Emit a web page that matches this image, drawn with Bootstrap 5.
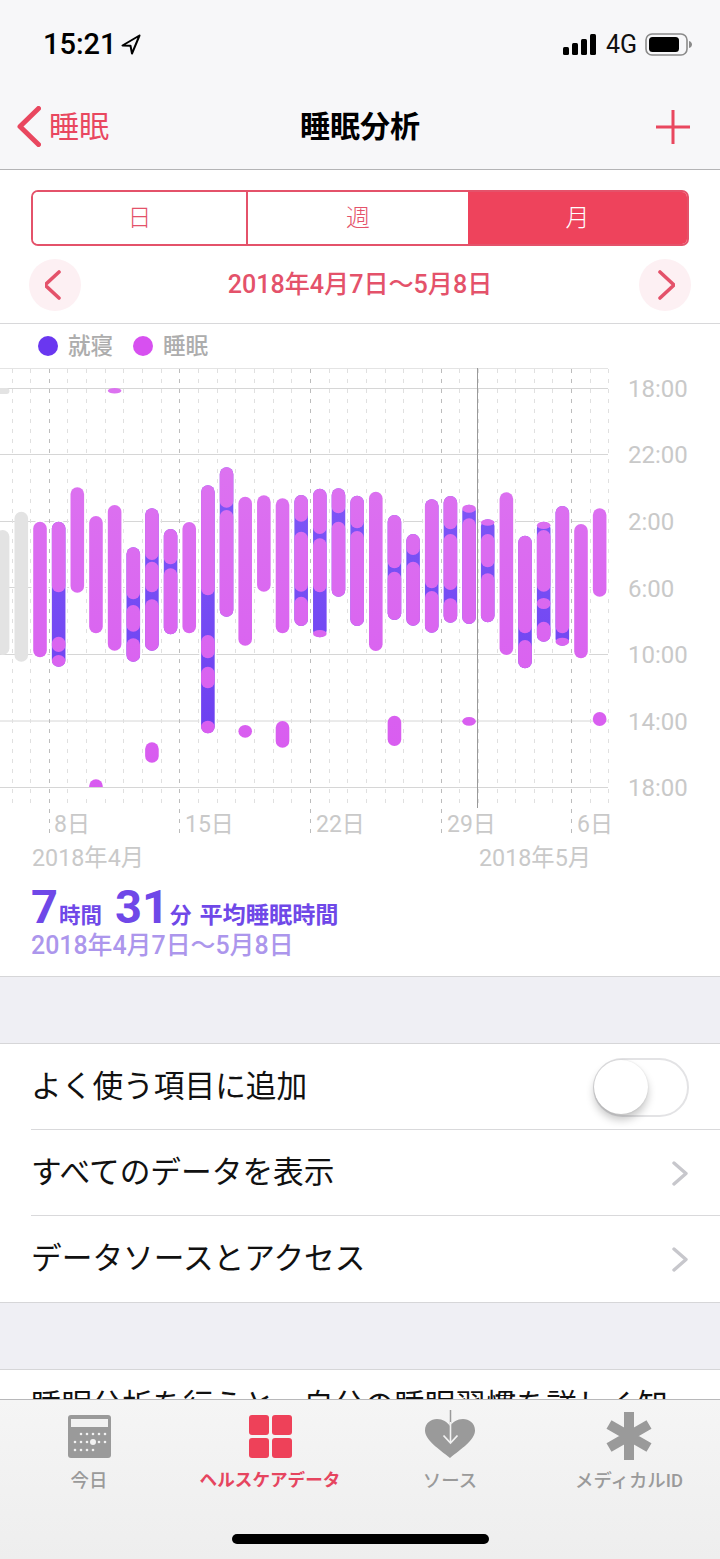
<!DOCTYPE html>
<html lang="ja">
<head>
  <meta charset="UTF-8" />
  <meta name="viewport" content="width=device-width, initial-scale=1.0"/>
  <title>睡眠分析</title>
  <link href="https://cdn.jsdelivr.net/npm/bootstrap@5.3.0/dist/css/bootstrap.min.css" rel="stylesheet"/>
  <style>
    body {
      width: 720px;
      height: 1559px;
      overflow: hidden;
      background: #efeff4;
      font-family: Roboto, "Noto Sans CJK JP", sans-serif;
      position: relative;
    }
    .top-bar {
      height: 170px;
      background: #f7f7f9;
      border-bottom: 1px solid #b4b4b6;
    }
    .status-row {
      height: 88px;
      padding: 0 28px 0 43px;
    }
    .clock {
      font-size: 29px;
      font-weight: 500;
      color: #000;
      line-height: 1;
    }
    .net-label {
      font-size: 25px;
      color: #111;
      line-height: 1;
    }
    .nav-row {
      height: 81px;
      padding: 0 30px 4px 17px;
      position: relative;
    }
    .nav-back {
      font-size: 30px;
      color: #e9475f;
      line-height: 1;
    }
    .nav-title {
      position: absolute;
      left: 0;
      right: 0;
      text-align: center;
      font-size: 30px;
      font-weight: 700;
      color: #000;
      line-height: 1;
    }
    .chart-sheet {
      background: #fff;
      border-bottom: 1px solid #d6d6d8;
      height: 807px;
      padding-top: 20px;
    }
    .seg-group {
      margin: 0 31px;
      width: 658px;
      height: 56px;
      border: 2px solid #e4526a;
      border-radius: 7px;
      overflow: hidden;
    }
    .seg-btn {
      flex: 0 0 auto;
      padding: 0;
      border: 0;
      border-radius: 0;
      background: #fff;
      color: #e4526a;
      font-size: 24px;
      font-weight: 300;
      line-height: 1;
    }
    .seg-first {
      width: 215px;
      border-right: 2px solid #e4526a;
    }
    .seg-mid {
      width: 220px;
    }
    .seg-on {
      width: 219px;
      background: #ee435c;
      color: #fff;
    }
    .date-row {
      height: 78px;
      padding: 13px 29px 13px 29px;
      border-bottom: 1px solid #d8d8da;
    }
    .round-btn {
      width: 52px;
      height: 52px;
      border-radius: 50%;
      background: #fdf0f3;
    }
    .range-title {
      font-size: 25.1px;
      font-weight: 500;
      color: #e4526a;
      line-height: 1;
    }
    .legend-row {
      height: 44px;
      padding-left: 38px;
    }
    .legend-dot {
      width: 20px;
      height: 20px;
      border-radius: 50%;
    }
    .legend-name {
      font-size: 22.5px;
      font-weight: 500;
      color: #adadad;
      line-height: 1;
      margin: 0 20px 0 10px;
    }
    .chart-svg {
      display: block;
      width: 720px;
      height: 510px;
    }
    .chart-svg text {
      font-family: Roboto, "Noto Sans CJK JP", sans-serif;
      fill: #c9c9c9;
    }
    .avg-box {
      padding: 5px 0 0 31px;
      color: #6f48e8;
      line-height: 1;
    }
    .avg-main {
      font-weight: 700;
      height: 51px;
    }
    .avg-num {
      font-size: 47px;
      font-weight: 700;
      margin-right: 1px;
    }
    .avg-unit {
      font-size: 21.5px;
      margin-right: 13px;
    }
    .avg-label {
      font-size: 23.2px;
      margin-left: -5px;
    }
    .avg-range {
      font-size: 24.9px;
      font-weight: 500;
      color: #ac96ec;
    }
    .gray-gap {
      height: 66px;
    }
    .menu-list {
      background: #fff;
      border-top: 1px solid #d6d6d8;
      border-bottom: 1px solid #d6d6d8;
      border-radius: 0;
    }
    .menu-item {
      height: 86px;
      padding: 0 32px 0 31px;
      border: 0;
      font-size: 30.7px;
      color: #111;
      line-height: 1;
      position: relative;
    }
    .menu-item + .menu-item::before {
      content: "";
      position: absolute;
      left: 31px;
      right: 0;
      top: -1px;
      border-top: 1px solid #d9d9db;
    }
    .toggle-track {
      width: 96px;
      height: 59px;
      margin-right: -1px;
      border: 2px solid #e3e3e5;
      border-radius: 30px;
      background: #fff;
    }
    .toggle-knob {
      width: 54px;
      height: 54px;
      margin-left: -1px;
      border-radius: 50%;
      background: #fff;
      box-shadow: 0 6px 9px rgba(0,0,0,.22), 0 0 2px rgba(0,0,0,.12);
    }
    .note-block {
      background: #fff;
      border-top: 1px solid #d6d6d8;
      height: 200px;
      padding: 18px 0 0 31px;
      font-size: 30.4px;
      color: #111;
      line-height: 1.2;
      white-space: nowrap;
    }
    .tab-strip {
      position: absolute;
      left: 0;
      right: 0;
      bottom: 0;
      height: 160px;
      background: linear-gradient(#f5f5f5, #eeeeee);
      border-top: 1px solid #b8b8ba;
    }
    .tab-slot {
      position: absolute;
      top: 0;
      text-align: center;
      color: #9a9a9a;
      font-size: 18.4px;
      font-weight: 500;
      line-height: 1;
      white-space: nowrap;
    }
    .tab-slot svg {
      display: block;
      margin: 0 auto;
    }
    .tab-text {
      position: absolute;
      left: 0;
      right: 0;
      top: 72px;
    }
    .tab-active {
      color: #e6455f;
      font-weight: 700;
      font-size: 17.6px;
    }
    .home-bar {
      position: absolute;
      left: 232px;
      top: 134px;
      width: 257px;
      height: 10px;
      border-radius: 5px;
      background: #000;
    }
  </style>
</head>
<body>

<div class="top-bar">
  <div class="status-row d-flex align-items-center justify-content-between">
    <div class="d-flex align-items-center gap-1">
      <span class="clock">15:21</span>
      <svg width="20" height="21" viewBox="0 0 20 21"><path d="M18.5 1.5 1.5 11.5 9.5 11.8 11 19.5Z" fill="none" stroke="#000" stroke-width="2" stroke-linejoin="round"/></svg>
    </div>
    <div class="d-flex align-items-center">
      <svg width="34" height="21" viewBox="0 0 34 21" style="margin-right:9px"><rect x="0" y="13" width="6" height="8" rx="1.5"/><rect x="9" y="9" width="6" height="12" rx="1.5"/><rect x="18" y="5" width="6" height="16" rx="1.5"/><rect x="27" y="0" width="6" height="21" rx="1.5"/></svg>
      <span class="net-label me-2">4G</span>
      <svg width="47" height="23" viewBox="0 0 47 23"><rect x="1" y="1" width="41" height="21" rx="6" fill="none" stroke="#8a8a8a" stroke-width="1.6"/><rect x="4" y="4" width="30" height="15" rx="3.5"/><path d="M44 8c2 .5 3 2 3 3.500s-1 3-3 3.500Z" fill="#8a8a8a"/></svg>
    </div>
  </div>
  <div class="nav-row d-flex align-items-center justify-content-between">
    <div class="d-flex align-items-center nav-back">
      <svg width="24" height="41" viewBox="0 0 24 41" class="me-2"><path d="M21.500 2.500 3 20.500l18.500 18" fill="none" stroke="#e9475f" stroke-width="5" stroke-linecap="round" stroke-linejoin="round"/></svg>
      <span>睡眠</span>
    </div>
    <div class="nav-title">睡眠分析</div>
    <svg width="34" height="34" viewBox="0 0 34 34"><path d="M17 0v34M0 17h34" stroke="#e9475f" stroke-width="3"/></svg>
  </div>
</div>

<div class="chart-sheet">
  <div class="seg-group d-flex" role="group">
    <button type="button" class="btn seg-btn seg-first">日</button>
    <button type="button" class="btn seg-btn seg-mid">週</button>
    <button type="button" class="btn seg-btn seg-on">月</button>
  </div>
  <div class="date-row d-flex align-items-center justify-content-between">
    <div class="round-btn d-flex align-items-center justify-content-center">
      <svg width="20" height="30" viewBox="3 0 20 30"><path d="M17 2 3 15l14 13" fill="none" stroke="#e4526a" stroke-width="3.600" stroke-linecap="round" stroke-linejoin="round"/></svg>
    </div>
    <div class="range-title">2018年4月7日〜5月8日</div>
    <div class="round-btn d-flex align-items-center justify-content-center">
      <svg width="20" height="30" viewBox="-2 0 20 30"><path d="M3 2l14 13L3 28" fill="none" stroke="#e4526a" stroke-width="3.600" stroke-linecap="round" stroke-linejoin="round"/></svg>
    </div>
  </div>
  <div class="legend-row d-flex align-items-center">
    <span class="legend-dot" style="background:#6a37f0"></span><span class="legend-name">就寝</span>
    <span class="legend-dot" style="background:#d750f0"></span><span class="legend-name">睡眠</span>
  </div>
  <svg class="chart-svg" id="sleepChart" viewBox="0 368 720 510" xmlns="http://www.w3.org/2000/svg">
    <defs>
      <linearGradient id="pinkFill" gradientUnits="userSpaceOnUse" x1="0" y1="470" x2="0" y2="790">
        <stop offset="0" stop-color="#dc72f0"/><stop offset="1" stop-color="#d85af0"/>
      </linearGradient>
      <linearGradient id="purpleFill" gradientUnits="userSpaceOnUse" x1="0" y1="470" x2="0" y2="740">
        <stop offset="0" stop-color="#7f58f7"/><stop offset="1" stop-color="#6c3ff0"/>
      </linearGradient>
    </defs>
  </svg>
  <div class="avg-box">
    <div class="avg-main d-flex align-items-baseline">
      <span class="avg-num">7</span><span class="avg-unit">時間</span>
      <span class="avg-num">31</span><span class="avg-unit">分</span>
      <span class="avg-label">平均睡眠時間</span>
    </div>
    <div class="avg-range">2018年4月7日〜5月8日</div>
  </div>
</div>

<div class="gray-gap"></div>

<div class="list-group list-group-flush menu-list">
  <div class="list-group-item menu-item d-flex align-items-center justify-content-between">
    <span>よく使う項目に追加</span>
    <div class="toggle-track d-flex align-items-center"><div class="toggle-knob"></div></div>
  </div>
  <div class="list-group-item menu-item d-flex align-items-center justify-content-between">
    <span>すべてのデータを表示</span>
    <svg width="16" height="25" viewBox="0 0 16 25"><path d="M2 2l12 10.500L2 23" fill="none" stroke="#c7c7cc" stroke-width="3.400" stroke-linecap="round" stroke-linejoin="round"/></svg>
  </div>
  <div class="list-group-item menu-item d-flex align-items-center justify-content-between">
    <span>データソースとアクセス</span>
    <svg width="16" height="25" viewBox="0 0 16 25"><path d="M2 2l12 10.500L2 23" fill="none" stroke="#c7c7cc" stroke-width="3.400" stroke-linecap="round" stroke-linejoin="round"/></svg>
  </div>
</div>

<div class="gray-gap"></div>

<div class="note-block">睡眠分析を行うと、自分の睡眠習慣を詳しく知</div>

<div class="tab-strip">
  <div class="tab-slot" style="left:29px;width:120px">
    <svg width="43" height="43" viewBox="0 0 43 43" style="margin-top:15px">
      <rect width="43" height="43" rx="3" fill="#9a9a9a"/>
      <rect x="3" y="4" width="37" height="8" fill="#f2f2f2"/>
      <g fill="#f2f2f2">
        <circle cx="13" cy="19" r="1.300"/><circle cx="19" cy="19" r="1.300"/><circle cx="25" cy="19" r="1.300"/><circle cx="31" cy="19" r="1.300"/><circle cx="37" cy="19" r="1.300"/>
        <circle cx="7" cy="27" r="1.300"/><circle cx="13" cy="27" r="1.300"/><circle cx="19" cy="27" r="1.300"/><circle cx="25" cy="27" r="3"/><circle cx="31" cy="27" r="1.300"/><circle cx="37" cy="27" r="1.300"/>
        <circle cx="7" cy="35" r="1.300"/><circle cx="13" cy="35" r="1.300"/><circle cx="19" cy="35" r="1.300"/><circle cx="25" cy="35" r="1.300"/>
      </g>
    </svg>
    <div class="tab-text">今日</div>
  </div>
  <div class="tab-slot tab-active" style="left:190px;width:160px">
    <svg width="43" height="43" viewBox="0 0 43 43" style="margin-top:15px" fill="#ee4159">
      <rect width="20" height="20" rx="3"/><rect x="23" width="20" height="20" rx="3"/><rect y="23" width="20" height="20" rx="3"/><rect x="23" y="23" width="20" height="20" rx="3"/>
    </svg>
    <div class="tab-text">ヘルスケアデータ</div>
  </div>
  <div class="tab-slot" style="left:390px;width:120px">
    <svg width="50" height="49" viewBox="0 0 50 49" style="margin-top:10px">
      <path d="M25 48C14 39 0 30 0 20.500 0 13 6 9 12 9c6 0 10 3 13 7 3-4 7-7 13-7 6 0 12 4 12 11.500C50 30 36 39 25 48Z" fill="#9a9a9a"/>
      <path d="M25.500 0v32" stroke="#9a9a9a" stroke-width="1.500"/>
      <path d="M25.500 12v20" stroke="#f2f2f2" stroke-width="1.600"/>
      <path d="M18.500 25.500l7 7.500 7-7.500" fill="none" stroke="#f2f2f2" stroke-width="1.800"/>
    </svg>
    <div class="tab-text">ソース</div>
  </div>
  <div class="tab-slot" style="left:569px;width:120px">
    <svg width="46" height="48" viewBox="0 0 46 48" style="margin-top:12px">
      <path d="M23 0v48M3 12.500l40 23M43 12.500l-40 23" stroke="#9a9a9a" stroke-width="10"/>
    </svg>
    <div class="tab-text">メディカルID</div>
  </div>
  <div class="home-bar"></div>
</div>

<script>
  // one entry per day: list of pink [top, bottom] runs, y in page pixels
  const dayBars = [
    [[521.7,657.3]],
    [[521.7,592.3],[636.7,652],[655,666.7]],
    [[487.3,592.7]],
    [[516,633.3]],
    [[505,650.7]],
    [[547.3,599.3],[605,631.7],[638.3,661.7]],
    [[508.3,560],[561.7,592.3],[599.3,650.7]],
    [[529,564.3],[568.3,634.3]],
    [[522,633.3]],
    [[485.3,595.3],[635,658.3],[666.7,688.3],[720.7,733.3]],
    [[467.3,507.7],[510,616.7]],
    [[496.7,645.7]],
    [[495.3,591.7]],
    [[498.3,633.3]],
    [[495,521.7],[531.7,591.7],[596.7,626]],
    [[488.7,534],[538.3,592.3],[630,637.3]],
    [[488.3,513.3],[521.7,596.7]],
    [[495.7,528.3],[531,626]],
    [[491.7,651]],
    [[515,568.3],[571.7,620]],
    [[534,555],[561.7,625.7]],
    [[499.3,588.3],[591,632.7]],
    [[496,529.3],[534,590],[598.3,622.7]],
    [[504.7,512.7],[518.3,624]],
    [[519.3,525.7],[534,567.3],[573.3,622.3]],
    [[492.3,655]],
    [[535.7,633.3],[640,668.3]],
    [[521.7,529],[530,591.7],[598,609],[621.7,641.7]],
    [[506,633.3],[637.7,645.7]],
    [[524,658.3]],
    [[508.3,596.7]]
  ];
  // separate naps under the main bars: day index, top, bottom
  const naps = [
    [3,779.3,795], [4,388,393.5], [6,742.3,762.7], [11,725,737.7],
    [13,721,747.7], [19,715.7,746], [23,717,725.7], [30,712,726]
  ];

  const svg = document.getElementById('sleepChart');
  const ns = 'http://www.w3.org/2000/svg';
  const dayX = i => 40 + 18.655 * i;
  const barW = 13.6;

  function add(tag, attrs, text) {
    const el = document.createElementNS(ns, tag);
    for (const k in attrs) el.setAttribute(k, attrs[k]);
    if (text) el.textContent = text;
    svg.appendChild(el);
    return el;
  }
  function bar(x, top, bottom, fill) {
    const h = bottom - top;
    add('rect', { x: x - barW / 2, y: top, width: barW, height: h, rx: barW / 2, ry: Math.min(barW / 2, h / 2), fill: fill });
  }

  // grid
  add('line', { x1: 0, x2: 608, y1: 368.5, y2: 368.5, stroke: '#e4e4e4' });
  [388.5, 454.5, 521.5, 587.5, 654.5, 721, 787.5].forEach(y => {
    add('line', { x1: 0, x2: 608, y1: y, y2: y, stroke: '#d6d6d6' });
  });
  for (let k = 0; k < 33; k++) {
    const x = Math.round(11.5 + 18.655 * k) + 0.5;
    const major = k % 7 === 2;
    add('line', { x1: x, x2: x, y1: 369, y2: major ? 838 : 803, stroke: major ? '#bcbcbc' : '#e0e0e0', 'stroke-dasharray': '4 6' });
  }

  // faded days before the range
  bar(2.6, 530, 655, '#e3e3e3');
  bar(21.3, 511.7, 661.7, '#e3e3e3');
  add('rect', { x: -5, y: 388, width: 14.500, height: 6, rx: 3, fill: '#e3e3e3' });

  // the days
  dayBars.forEach((runs, i) => {
    const x = dayX(i);
    const top = runs[0][0];
    const bottom = runs[runs.length - 1][1];
    add('rect', { x: x - barW / 2, y: top, width: barW, height: bottom - top, rx: barW / 2, stroke: '#fff', 'stroke-width': 3.500, fill: '#fff' });
    if (runs.length > 1) bar(x, top, bottom, 'url(#purpleFill)');
    runs.forEach(r => bar(x, r[0], r[1], 'url(#pinkFill)'));
  });
  naps.forEach(n => bar(dayX(n[0]), n[1], n[2], 'url(#pinkFill)'));
  // nap cut off by the bottom line
  add('rect', { x: 85, y: 787.5, width: 22, height: 9, fill: '#fff' });
  add('line', { x1: 85, x2: 107, y1: 787.5, y2: 787.5, stroke: '#d6d6d6' });

  // cursor line
  add('line', { x1: 477.500, x2: 477.500, y1: 368, y2: 808, stroke: '#9a9a9a' });

  // labels
  [['18:00',397],['22:00',463],['2:00',530],['6:00',597],['10:00',663],['14:00',730],['18:00',796]].forEach(l => {
    add('text', { x: 628, y: l[1], 'font-size': 24 }, l[0]);
  });
  [['8日',54],['15日',185],['22日',316],['29日',447],['6日',577]].forEach(l => {
    add('text', { x: l[1], y: 832, 'font-size': 23 }, l[0]);
  });
  add('text', { x: 32, y: 866, 'font-size': 23.300 }, '2018年4月');
  add('text', { x: 479, y: 866, 'font-size': 23.300 }, '2018年5月');
</script>

<script src="https://cdn.jsdelivr.net/npm/bootstrap@5.3.0/dist/js/bootstrap.bundle.min.js"></script>
</body>
</html>
